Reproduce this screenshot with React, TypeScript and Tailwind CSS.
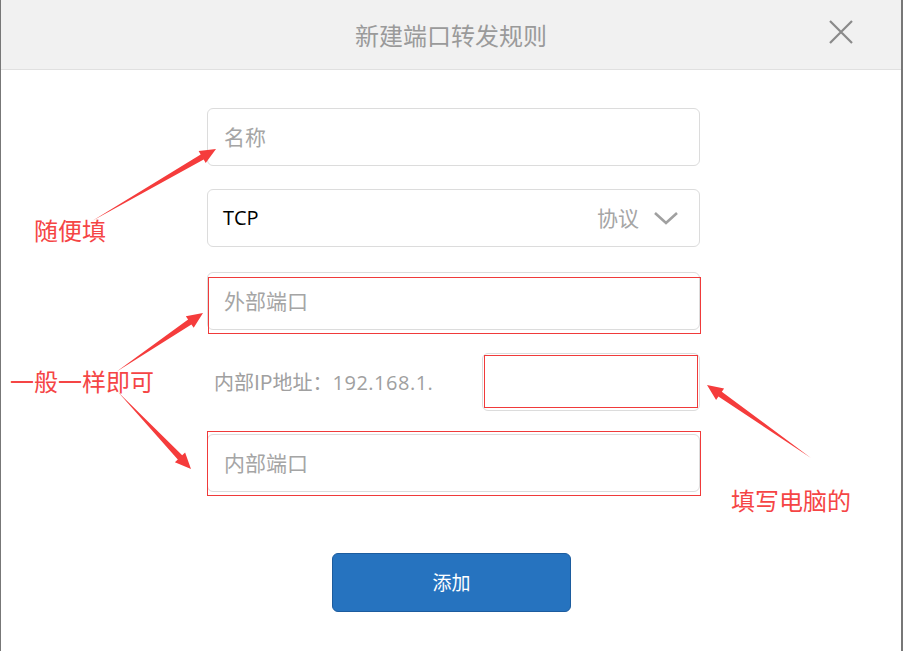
import React from "react";

type Pt = [number, number];

// tapered annotation arrow: thin tail, wider shaft, triangular head
function arrowPoints(from: Pt, to: Pt, shaft = 3, head = 16, headW = 7): string {
  const dx = to[0] - from[0];
  const dy = to[1] - from[1];
  const len = Math.hypot(dx, dy);
  const ux = dx / len;
  const uy = dy / len;
  const nx = -uy;
  const ny = ux;
  const bx = to[0] - ux * head;
  const by = to[1] - uy * head;
  const nb = (k: number): Pt => [bx + nx * k, by + ny * k];
  const pts: Pt[] = [from, nb(shaft), nb(headW), to, nb(-headW), nb(-shaft)];
  return pts.map((p) => `${p[0].toFixed(1)},${p[1].toFixed(1)}`).join(" ");
}

const arrows: { from: Pt; to: Pt }[] = [
  { from: [92, 221], to: [216, 149] },
  { from: [116, 372], to: [203, 313] },
  { from: [118, 392], to: [191, 469] },
  { from: [811, 458], to: [707, 385] },
];

const cjk = { fontFamily: '"Noto Sans CJK SC", sans-serif' };
const latin = { fontFamily: '"Open Sans", "Noto Sans CJK SC", sans-serif' };

export default function App() {
  return (
    <div className="relative w-[903px] h-[651px] overflow-hidden bg-[#777777] flex" style={cjk}>
      {/* Modal */}
      <div className="ml-[1px] w-[900px] h-full bg-white flex flex-col">
        <div className="h-[70px] shrink-0 bg-[#f1f1f1] border-b border-[#e0e0e0] flex items-center justify-center relative">
          <span className="text-[24px] text-[#9a9a9a] leading-none">新建端口转发规则</span>
          <button className="absolute right-[46px] top-[18px] w-[28px] h-[28px] flex items-center justify-center">
            <svg width="28" height="28" viewBox="0 0 28 28" fill="none">
              <path d="M3 3L25 25M25 3L3 25" stroke="#8a8a8a" strokeWidth="2.2" />
            </svg>
          </button>
        </div>

        <div className="ml-[206px] w-[493px] pt-[38px] flex flex-col">
          <div className="h-[58px] rounded-md border border-[#dcdcdc] flex items-center px-4">
            <span className="text-[21px] text-[#a5a5a5]">名称</span>
          </div>

          <div className="mt-[23px] h-[58px] rounded-md border border-[#dcdcdc] flex items-center pl-[15px] pr-[20px]">
            <span className="text-[20px] text-black flex-1" style={latin}>
              TCP
            </span>
            <span className="text-[21px] text-[#a5a5a5] mr-[14px]">协议</span>
            <svg width="26" height="16" viewBox="0 0 26 16" fill="none">
              <path d="M2 3L13 13L24 3" stroke="#a0a0a0" strokeWidth="2.6" />
            </svg>
          </div>

          <div className="mt-[25px] h-[58px] rounded-md border border-[#dcdcdc] flex items-center px-4">
            <span className="text-[21px] text-[#a5a5a5]">外部端口</span>
          </div>

          <div className="mt-[23px] h-[58px] flex items-center">
            <span className="ml-[7px] text-[20px] text-[#a0a0a0] flex-1">
              内部IP地址：<span className="tracking-[0.5px]" style={latin}>192.168.1.</span>
            </span>
            <div className="w-[218px] h-[58px] rounded-md border border-[#dcdcdc]" />
          </div>

          <div className="mt-[23px] h-[58px] rounded-md border border-[#dcdcdc] flex items-center px-4">
            <span className="text-[21px] text-[#a5a5a5]">内部端口</span>
          </div>

          <div className="mt-[61px] flex justify-center">
            <button className="ml-[-4px] w-[239px] h-[59px] rounded-md bg-[#2673bf] border border-[#1c5c9e] text-white text-[19px]">
              添加
            </button>
          </div>
        </div>
      </div>

      {/* Annotation overlay */}
      <div className="absolute left-[208px] top-[277px] w-[493px] h-[57px] border border-[#f03a3a] pointer-events-none" />
      <div className="absolute left-[484px] top-[355px] w-[214px] h-[53px] border border-[#f03a3a] pointer-events-none" />
      <div className="absolute left-[207px] top-[431px] w-[494px] h-[65px] border border-[#f03a3a] pointer-events-none" />

      <svg className="absolute left-0 top-0 pointer-events-none" width="903" height="651">
        {arrows.map((a, i) => (
          <polygon key={i} points={arrowPoints(a.from, a.to)} fill="#f53c3c" />
        ))}
      </svg>

      <span className="absolute left-[34px] top-[218px] text-[24px] leading-none text-[#f54545] pointer-events-none">
        随便填
      </span>
      <span className="absolute left-[10px] top-[369px] text-[24px] leading-none text-[#f54545] pointer-events-none">
        一般一样即可
      </span>
      <span className="absolute left-[731px] top-[488px] text-[24px] leading-none text-[#f54545] pointer-events-none">
        填写电脑的
      </span>
    </div>
  );
}
